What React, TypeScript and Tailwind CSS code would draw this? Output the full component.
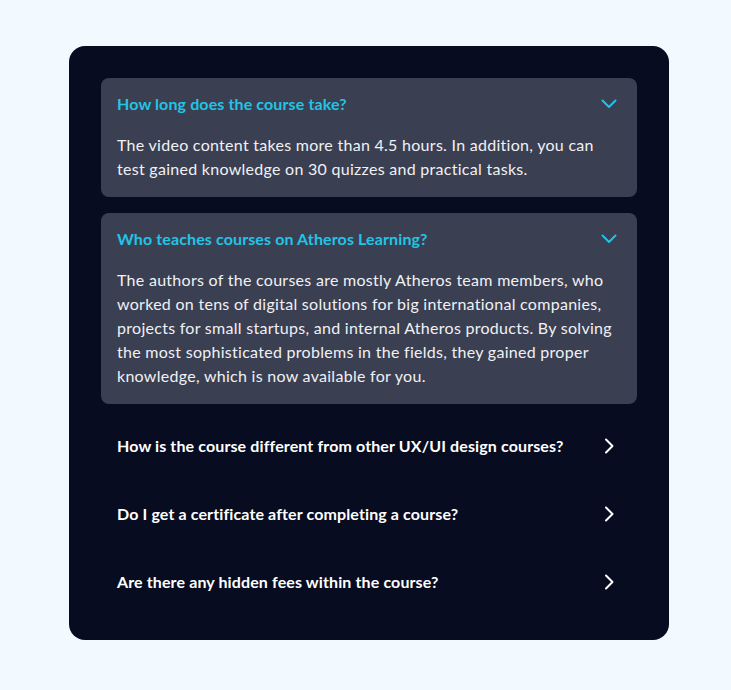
const faqs = [
  {
    q: "How long does the course take?",
    a: "The video content takes more than 4.5 hours. In addition, you can test gained knowledge on 30 quizzes and practical tasks.",
    open: true,
  },
  {
    q: "Who teaches courses on Atheros Learning?",
    a: "The authors of the courses are mostly Atheros team members, who worked on tens of digital solutions for big international companies, projects for small startups, and internal Atheros products. By solving the most sophisticated problems in the fields, they gained proper knowledge, which is now available for you.",
    open: true,
  },
  { q: "How is the course different from other UX/UI design courses?", a: "", open: false },
  { q: "Do I get a certificate after completing a course?", a: "", open: false },
  { q: "Are there any hidden fees within the course?", a: "", open: false },
];

function ChevronDown() {
  return (
    <svg width="16" height="10" viewBox="0 0 16 10" fill="none" className="text-[#22c4e6]">
      <path d="M1.5 1.5 L8 8 L14.5 1.5" stroke="currentColor" strokeWidth="2" strokeLinecap="round" strokeLinejoin="round" />
    </svg>
  );
}

function ChevronRight() {
  return (
    <svg width="10" height="16" viewBox="0 0 10 16" fill="none" className="text-white">
      <path d="M2 1.5 L8.5 8 L2 14.5" stroke="currentColor" strokeWidth="2" strokeLinecap="round" strokeLinejoin="round" />
    </svg>
  );
}

export default function App() {
  return (
    <div className="min-h-screen bg-[#f3faff] pt-[46px] pl-[69px]" style={{ fontFamily: "Lato, 'Noto Sans', sans-serif" }}>
      <div className="w-[600px] rounded-2xl bg-[#070c20] p-8">
        <div className="flex flex-col gap-4">
          {faqs.map((f, i) => (
            <div key={i} className={f.open ? "rounded-lg bg-[#3a3f51] py-4 pl-4 pr-[18px]" : "py-4 pl-4 pr-[18px]"}>
              <div className="flex items-center justify-between">
                <h3 className={`text-base font-bold leading-5 tracking-[0.12px] ${f.open ? "text-[#22c4e6]" : "text-white"}`}>
                  {f.q}
                </h3>
                <span className="flex h-5 w-5 items-center justify-center">
                  {f.open ? <ChevronDown /> : <ChevronRight />}
                </span>
              </div>
              {f.open && (
                <p className="mt-[19px] text-base leading-6 tracking-[0.28px] text-[#f0f1f5]">{f.a}</p>
              )}
            </div>
          ))}
        </div>
      </div>
    </div>
  );
}
